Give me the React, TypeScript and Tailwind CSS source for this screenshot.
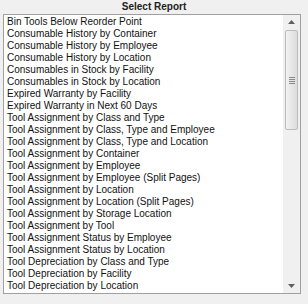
const reports = [
  'Bin Tools Below Reorder Point',
  'Consumable History by Container',
  'Consumable History by Employee',
  'Consumable History by Location',
  'Consumables in Stock by Facility',
  'Consumables in Stock by Location',
  'Expired Warranty by Facility',
  'Expired Warranty in Next 60 Days',
  'Tool Assignment by Class and Type',
  'Tool Assignment by Class, Type and Employee',
  'Tool Assignment by Class, Type and Location',
  'Tool Assignment by Container',
  'Tool Assignment by Employee',
  'Tool Assignment by Employee (Split Pages)',
  'Tool Assignment by Location',
  'Tool Assignment by Location (Split Pages)',
  'Tool Assignment by Storage Location',
  'Tool Assignment by Tool',
  'Tool Assignment Status by Employee',
  'Tool Assignment Status by Location',
  'Tool Depreciation by Class and Type',
  'Tool Depreciation by Facility',
  'Tool Depreciation by Location',
  'Tool History by Container',
]

export default function App() {
  return (
    <div className="w-[308px] h-[304px] bg-[#f0f0f0] text-[#111] font-['Liberation_Sans',Arial,sans-serif] overflow-hidden">
      <div className="h-[14px] text-center text-[10px] font-bold leading-[13px] text-[#222]">Select Report</div>
      <div className="ml-[3px] w-[298px] h-[280px] border border-[#a0a0a0] bg-white flex">
        <ul className="flex-1 overflow-hidden pt-[1px] pl-[3px]">
          {reports.map((r) => (
            <li key={r} className="h-[12px] text-[10px] leading-[12px] whitespace-nowrap">
              {r}
            </li>
          ))}
        </ul>
        <div className="w-[17px] bg-[#f0f0f0] flex flex-col items-center">
          <div className="h-[14px] w-full flex items-center justify-center">
            <svg width="7" height="4" viewBox="0 0 7 4"><path d="M0 4 L3.5 0 L7 4 Z" fill="#606060" /></svg>
          </div>
          <div className="mt-[1px] w-[13px] h-[100px] border border-[#bcbcbc] bg-gradient-to-r from-[#f2f2f2] to-[#dcdcdc] rounded-[2px] flex items-center justify-center">
            <div className="flex flex-col gap-[1px]">
              <div className="w-[6px] h-[1px] bg-[#8a8a8a]" />
              <div className="w-[6px] h-[1px] bg-[#8a8a8a]" />
              <div className="w-[6px] h-[1px] bg-[#8a8a8a]" />
              <div className="w-[6px] h-[1px] bg-[#8a8a8a]" />
            </div>
          </div>
          <div className="flex-1" />
          <div className="h-[14px] w-full flex items-center justify-center">
            <svg width="7" height="4" viewBox="0 0 7 4"><path d="M0 0 L3.5 4 L7 0 Z" fill="#606060" /></svg>
          </div>
        </div>
      </div>
    </div>
  )
}
